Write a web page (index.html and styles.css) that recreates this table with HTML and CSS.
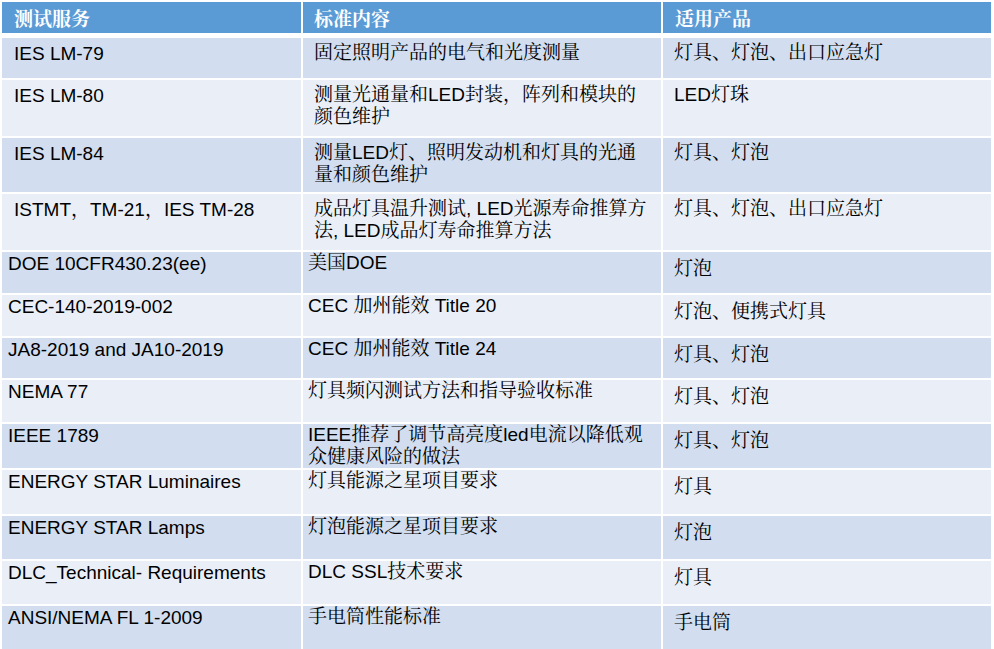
FILE: index.html
```html
<!DOCTYPE html>
<html lang="zh-CN">
<head>
<meta charset="utf-8">
<title>测试服务</title>
<link rel="stylesheet" href="styles.css">
</head>
<body>
<table class="spec">
  <colgroup><col class="c1"><col class="c2"><col class="c3"></colgroup>
  <thead>
    <tr class="head"><th>测试服务</th><th>标准内容</th><th>适用产品</th></tr>
  </thead>
  <tbody>
    <tr class="odd ga h40"><td>IES LM-79</td><td>固定照明产品的电气和光度测量</td><td>灯具、灯泡、出口应急灯</td></tr>
    <tr class="even ga h56"><td>IES LM-80</td><td>测量光通量和LED封装，阵列和模块的<br>颜色维护</td><td>LED灯珠</td></tr>
    <tr class="odd ga h54"><td>IES LM-84</td><td>测量LED灯、照明发动机和灯具的光通<br>量和颜色维护</td><td>灯具、灯泡</td></tr>
    <tr class="even ga h56"><td>ISTMT，TM-21，IES TM-28</td><td>成品灯具温升测试, LED光源寿命推算方<br>法, LED成品灯寿命推算方法</td><td>灯具、灯泡、出口应急灯</td></tr>
    <tr class="odd gb h41"><td>DOE 10CFR430.23(ee)</td><td>美国DOE</td><td>灯泡</td></tr>
    <tr class="even gb h41"><td>CEC-140-2019-002</td><td>CEC 加州能效 Title 20</td><td>灯泡、便携式灯具</td></tr>
    <tr class="odd gb h40"><td>JA8-2019 and JA10-2019</td><td>CEC 加州能效 Title 24</td><td>灯具、灯泡</td></tr>
    <tr class="even gb h42"><td>NEMA 77</td><td>灯具频闪测试方法和指导验收标准</td><td>灯具、灯泡</td></tr>
    <tr class="odd gb h42"><td>IEEE 1789</td><td>IEEE推荐了调节高亮度led电流以降低观<br>众健康风险的做法</td><td>灯具、灯泡</td></tr>
    <tr class="even gb h44"><td>ENERGY STAR Luminaires</td><td>灯具能源之星项目要求</td><td>灯具</td></tr>
    <tr class="odd gb h43"><td>ENERGY STAR Lamps</td><td>灯泡能源之星项目要求</td><td>灯泡</td></tr>
    <tr class="even gb h43"><td>DLC_Technical- Requirements</td><td>DLC SSL技术要求</td><td>灯具</td></tr>
    <tr class="odd gb h43"><td>ANSI/NEMA FL 1-2009</td><td>手电筒性能标准</td><td>手电筒</td></tr>
  </tbody>
</table>
</body>
</html>
```

FILE: styles.css
```css
html, body {
  margin: 0;
  padding: 0;
  background: #ffffff;
}

body {
  font-family: "Liberation Sans", "Noto Serif CJK SC", "Noto Sans CJK SC", sans-serif;
  font-size: 19px;
  color: #000000;
}

.spec {
  border-collapse: separate;
  border-spacing: 2px;
  table-layout: fixed;
  width: 993px;
}

col.c1 { width: 299px; }
col.c2 { width: 358px; }
col.c3 { width: 328px; }

.head { height: 34px; }

.head th {
  background: #5b9bd5;
  color: #ffffff;
  font-weight: bold;
  text-align: left;
  vertical-align: middle;
  border-bottom: 3px solid #ffffff;
  padding: 0 4px 0 12px;
  line-height: 22px;
  font-family: "Noto Serif CJK SC", "Noto Sans CJK SC", sans-serif;
  font-size: 19px;
}

.head th:nth-child(2) { padding-left: 11px; }
.head th:nth-child(3) { padding-left: 12px; }

.spec td {
  vertical-align: top;
  line-height: 22px;
  padding: 0 4px 0 0;
  overflow: hidden;
  white-space: nowrap;
}

.odd td { background: #d2deef; }
.even td { background: #eaeff7; }

.h40 { height: 40px; }
.h41 { height: 41px; }
.h42 { height: 42px; }
.h43 { height: 43px; }
.h44 { height: 44px; }
.h54 { height: 54px; }
.h56 { height: 56px; }

.ga td:nth-child(1) { padding-top: 5px; padding-left: 12px; }
.ga td:nth-child(2) { padding-top: 4px; padding-left: 11px; }
.ga td:nth-child(3) { padding-top: 4px; padding-left: 11px; }

.gb td:nth-child(1) { padding-top: 1px; padding-left: 6px; }
.gb td:nth-child(2) { padding-top: 0; padding-left: 5px; }
.gb td:nth-child(3) { padding-top: 6px; padding-left: 11px; }
```
